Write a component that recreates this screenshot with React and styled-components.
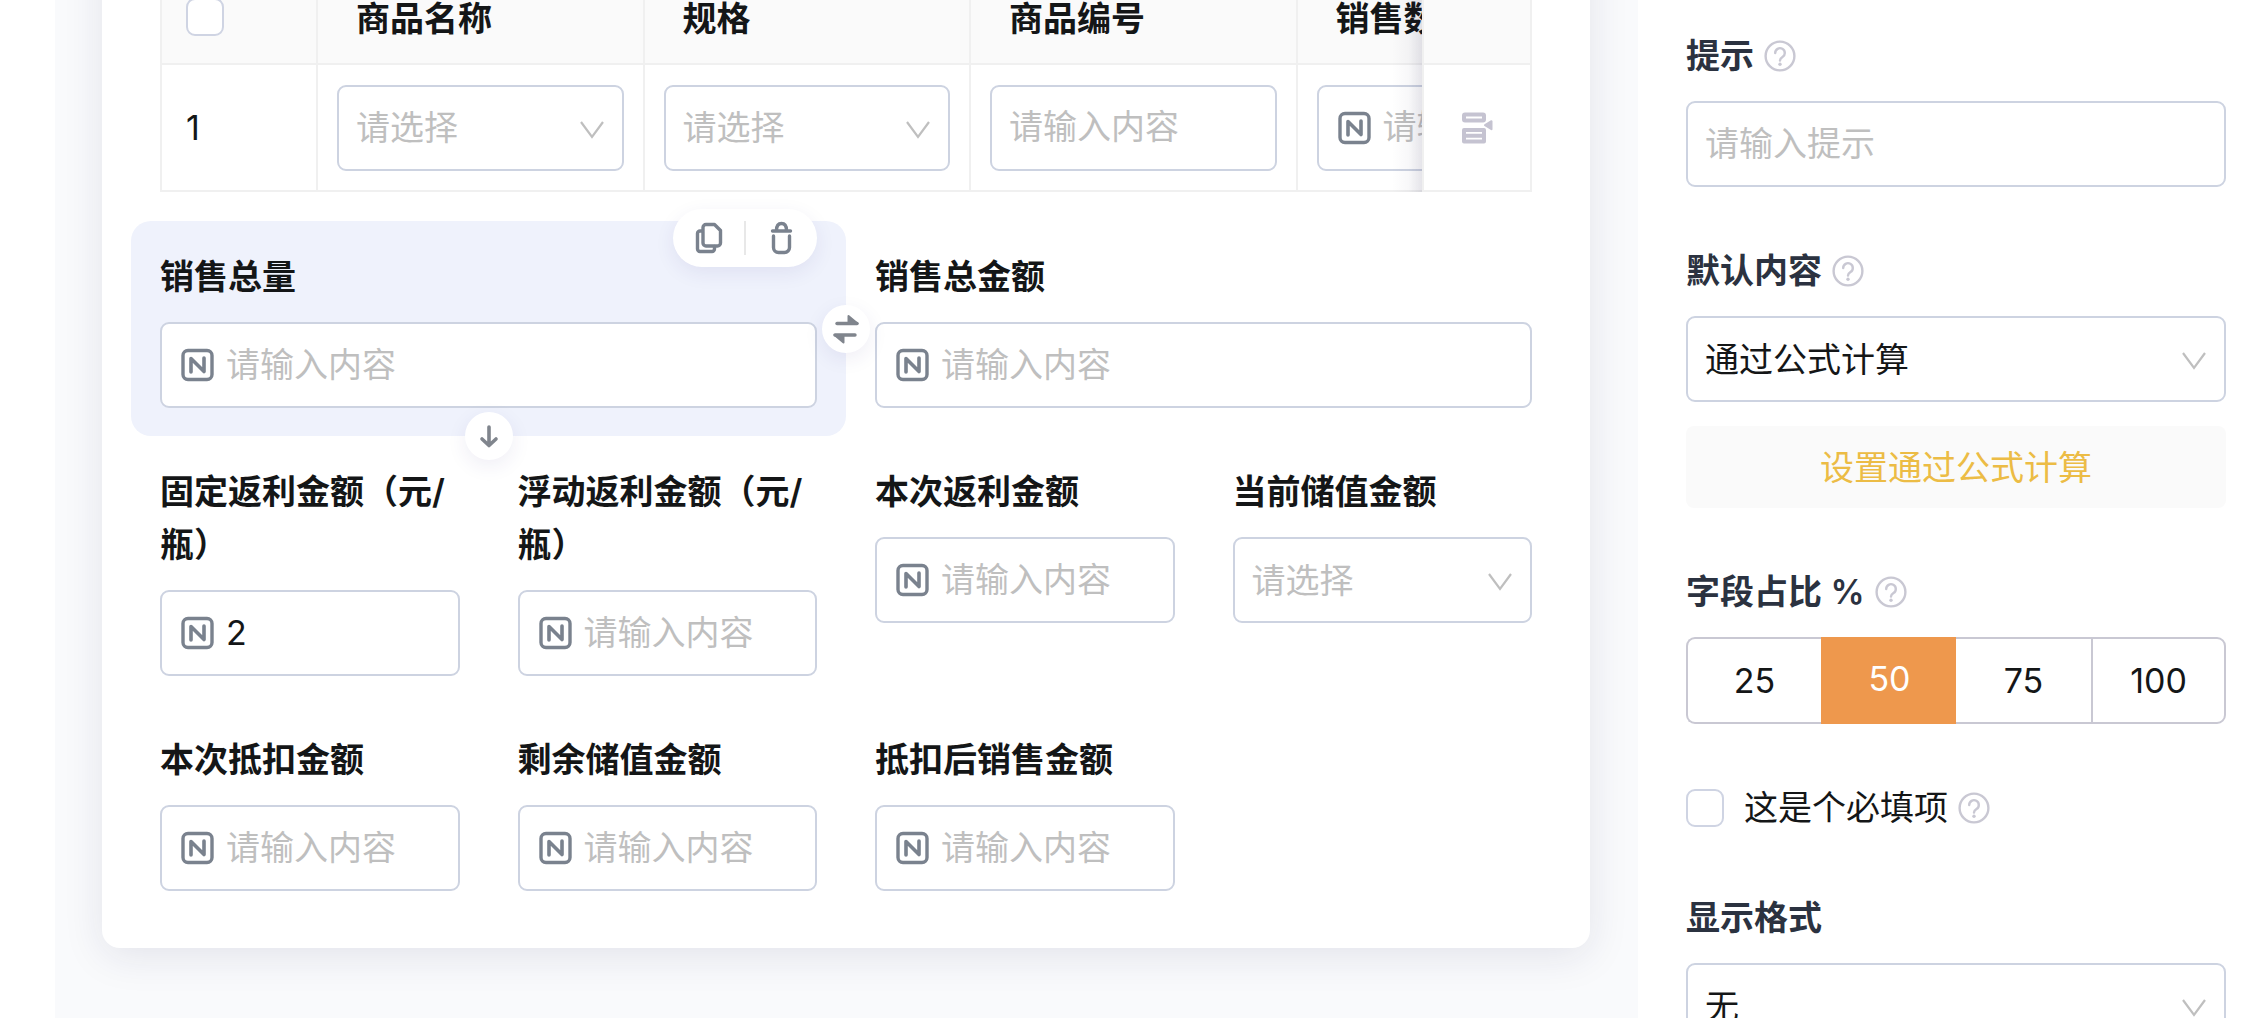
import { useState } from 'react'
import styled, { createGlobalStyle, css } from 'styled-components'

const GlobalStyle = createGlobalStyle`
  *, *::before, *::after {
    box-sizing: border-box;
  }

  body {
    margin: 0;
    background: #fff;
    color: #141617;
    font-family: Inter, 'Noto Sans CJK SC', sans-serif;
    font-size: 34px;
    line-height: 53px;
  }

  button, input, select {
    margin: 0;
    font: inherit;
    color: inherit;
  }
`

const Page = styled.div`
  display: flex;
  height: 100vh;
  overflow: hidden;
  padding-left: 55px;
`

const Canvas = styled.main`
  flex: 1;
  min-width: 0;
  overflow: hidden;
  padding: 0 48px 0 47px;
  background: #f9fafc;
`

/* the canvas is scrolled, so the top of the card is out of view */
const Card = styled.section`
  margin-top: -87px;
  padding: 58px 58px 29px;
  background: #fff;
  border-radius: 18px;
  box-shadow: 0 8px 40px rgba(30, 25, 80, 0.1);
`

const TableWrap = styled.div`
  overflow: hidden;
  margin-bottom: 29px;
`

const Table = styled.table`
  width: 1574px;
  table-layout: fixed;
  border-collapse: separate;
  border-spacing: 0;
`

const cell = css`
  padding: 0 19px;
  text-align: left;
  border-right: 2px solid #f0f0f0;
  border-bottom: 2px solid #f0f0f0;

  &:first-child {
    width: 158px;
    padding: 0 24px;
    border-left: 2px solid #f0f0f0;
  }

  &:last-child {
    position: sticky;
    right: 0;
    width: 110px;
    padding: 0;
    text-align: center;
    border-left: 2px solid #f0f0f0;
  }

  &:last-child::before {
    content: '';
    position: absolute;
    top: 0;
    right: 100%;
    bottom: -2px;
    width: 30px;
    margin-right: 2px;
    background: linear-gradient(
      to left,
      rgba(40, 35, 80, 0.12),
      rgba(40, 35, 80, 0.03) 45%,
      rgba(40, 35, 80, 0)
    );
  }
`

const Th = styled.th`
  ${cell}
  height: 94px;
  padding: 2px 38px 0;
  font-weight: 600;
  white-space: nowrap;
  background: #fafafa;
`

const Td = styled.td`
  ${cell}
  height: 127px;
  background: #fff;
`

const Checkbox = styled.input.attrs({ type: 'checkbox' })`
  appearance: none;
  display: block;
  flex: none;
  width: 38px;
  height: 38px;
  background: #fff;
  border: 2px solid #cfd4e3;
  border-radius: 9px;
`

const IconButton = styled.button`
  display: flex;
  align-items: center;
  justify-content: center;
  padding: 0;
  border: 0;
  background: none;

  td & {
    margin: 0 auto;
  }
`

const Box = styled.div`
  display: flex;
  align-items: center;
  height: 86px;
  padding: 0 18px 0 17px;
  background: #fff;
  border: 2px solid #cdd3e1;
  border-radius: 9px;

  & svg {
    flex: none;
  }
`

const Input = styled.input`
  flex: 1;
  min-width: 0;
  height: 100%;
  padding: 0 0 2px;
  border: 0;
  outline: 0;
  background: none;

  svg + & {
    margin-left: 11px;
  }

  &::placeholder {
    color: #bfbfbf;
    opacity: 1;
  }
`

const Select = styled.select`
  appearance: none;
  flex: 1;
  min-width: 0;
  height: 100%;
  padding: 0;
  border: 0;
  outline: 0;
  background: none;
  color: ${(props) => (props.$empty ? '#bfbfbf' : '#141617')};
`

const Form = styled.div`
  display: grid;
  grid-template-columns: repeat(4, minmax(0, 1fr));
  margin: 0 -29px;
`

const Field = styled.div`
  position: relative;
  grid-column: span ${(props) => props.$span || 1};
  padding: 29px 29px 28px;
  border-radius: 20px;
  background: ${(props) => (props.$active ? '#eff2fc' : 'none')};
`

const Label = styled.label`
  display: block;
  margin-bottom: 19px;
  font-weight: 600;
`

const floating = css`
  position: absolute;
  z-index: 1;
  background: #fff;
  box-shadow: 0 6px 20px rgba(50, 40, 130, 0.08);
`

const Tools = styled.div`
  ${floating}
  top: -12px;
  right: 29px;
  display: flex;
  align-items: center;
  width: 144px;
  height: 58px;
  border-radius: 29px;

  & button {
    flex: 1;
  }
`

const Divider = styled.span`
  width: 2px;
  height: 34px;
  background: #e8e8e8;
`

const RoundButton = styled(IconButton)`
  ${floating}
  width: 48px;
  height: 48px;
  border-radius: 50%;
`

const SwapButton = styled(RoundButton)`
  top: calc(50% - 24px);
  right: -24px;
`

const DownButton = styled(RoundButton)`
  bottom: -24px;
  left: calc(50% - 24px);
`

const Panel = styled.aside`
  display: flex;
  flex-direction: column;
  gap: 57px;
  flex: none;
  width: 618px;
  padding: 29px 30px 0 48px;
  background: #fff;
`

const Title = styled.div`
  display: flex;
  align-items: center;
  gap: 10px;
  margin-bottom: 19px;
  color: #2b3240;
  font-weight: 600;
`

const FormulaButton = styled.button`
  width: 100%;
  height: 82px;
  margin-top: 24px;
  padding: 0;
  border: 0;
  border-radius: 8px;
  background: #fafafa;
  color: #ecbc45;
`

const Segments = styled.div`
  display: grid;
  grid-template-columns: repeat(4, 1fr);
`

const Segment = styled.label`
  display: flex;
  align-items: center;
  justify-content: center;
  height: 87px;
  border: 2px solid #c9c8d3;
  border-right-width: 0;

  &:first-child {
    border-radius: 9px 0 0 9px;
  }

  &:last-child {
    border-right-width: 2px;
    border-radius: 0 9px 9px 0;
  }

  &:has(input:checked) {
    padding-bottom: 4px;
    border-color: #ee984d;
    background: #ee984d;
    color: #fff;
  }

  &:has(input:checked) + & {
    border-left-width: 0;
  }

  & input {
    position: absolute;
    opacity: 0;
  }
`

const CheckRow = styled.div`
  display: flex;
  align-items: center;
  gap: 10px;

  & label {
    margin-left: 10px;
  }
`

const NumberIcon = () => (
  <svg width="36" height="36" viewBox="0 0 36 36" fill="none" stroke="#7a828e" aria-hidden="true">
    <rect x="4" y="3.5" width="29" height="29" rx="5" strokeWidth="3.4" />
    <path d="M12 25V11.5L25 24.5V11" strokeWidth="3.6" strokeLinecap="round" strokeLinejoin="round" />
  </svg>
)

const ChevronIcon = () => (
  <svg width="24" height="24" viewBox="0 0 24 24" fill="none" stroke="#bfbfbf" strokeWidth="2.2" aria-hidden="true">
    <path d="M1 6L12 21L23 6" />
  </svg>
)

const HelpIcon = () => (
  <svg width="32" height="32" viewBox="0 0 32 32" fill="none" stroke="#c9c8d3" strokeWidth="2.4" aria-hidden="true">
    <circle cx="16" cy="16" r="14.4" />
    <path d="M11.200 13a4.800 4.800 0 1 1 7.300 4.100C16.800 18.200 16 19 16 20.500" strokeLinecap="round" />
    <circle cx="16" cy="24.200" r="1.700" fill="#c9c8d3" stroke="none" />
  </svg>
)

const CopyIcon = () => (
  <svg width="32" height="32" viewBox="0 0 32 32" fill="none" stroke="#7a828e" strokeWidth="3.4" strokeLinejoin="round" strokeLinecap="round" aria-hidden="true">
    <path d="M13 2.500h8.500l6 6V21a3 3 0 0 1-3 3H13a3 3 0 0 1-3-3V5.500a3 3 0 0 1 3-3z" />
    <path d="M9 9H7a2.500 2.500 0 0 0-2.500 2.500V27A2.500 2.500 0 0 0 7 29.500h12a2.500 2.500 0 0 0 2.500-2.500V24.500" />
  </svg>
)

const TrashIcon = () => (
  <svg width="32" height="34" viewBox="0 0 32 34" fill="none" stroke="#7a828e" strokeWidth="3.4" strokeLinecap="round" strokeLinejoin="round" aria-hidden="true">
    <path d="M6.500 10h18M10.500 9.500C10.500 5 12.500 2.500 15.500 2.500S20.500 5 20.500 9.500" />
    <path d="M7.500 15v11.500a5 5 0 0 0 5 5h6a5 5 0 0 0 5-5V15" />
  </svg>
)

const SwapIcon = () => (
  <svg width="32" height="32" viewBox="0 0 32 32" fill="#80858d" stroke="#80858d" strokeLinecap="round" strokeLinejoin="round" aria-hidden="true">
    <path d="M7 10.500H27" strokeWidth="3.4" />
    <path d="M18.500 3L27.500 10.500H18.500z" strokeWidth="2" />
    <path d="M5 22H25" strokeWidth="3.4" />
    <path d="M13.500 29.500L4.500 22H13.500z" strokeWidth="2" />
  </svg>
)

const DownIcon = () => (
  <svg width="24" height="24" viewBox="0 0 24 24" fill="none" stroke="#80858d" strokeWidth="3.6" strokeLinecap="round" strokeLinejoin="round" aria-hidden="true">
    <path d="M12 3V21.500M5 15L12 21.500L19 15" />
  </svg>
)

const RowIcon = () => (
  <svg width="32" height="32" viewBox="0 0 32 32" fill="none" stroke="#c5c3d1" aria-hidden="true">
    <rect x="3" y="2.500" width="20" height="6" rx="1" strokeWidth="4" />
    <path d="M3 18h20v11.500h-20zM3 23.700h20" strokeWidth="4" strokeLinejoin="round" />
    <path d="M24 13.200l6.500-4v8z" fill="#c5c3d1" strokeWidth="2" strokeLinejoin="round" />
  </svg>
)

const columns = [
  { title: '商品名称', type: 'select' },
  { title: '规格', type: 'select' },
  { title: '商品编号', type: 'text' },
  { title: '销售数量', type: 'number' },
]

const fields = [
  { id: 'total', label: '销售总量', span: 2, active: true },
  { id: 'amount', label: '销售总金额', span: 2 },
  { id: 'fixed', label: '固定返利金额（元/瓶）', value: '2' },
  { id: 'floating', label: '浮动返利金额（元/瓶）' },
  { id: 'rebate', label: '本次返利金额' },
  { id: 'stored', label: '当前储值金额', type: 'select' },
  { id: 'deduct', label: '本次抵扣金额' },
  { id: 'remain', label: '剩余储值金额' },
  { id: 'final', label: '抵扣后销售金额' },
]

const Control = ({ type = 'number', value, ...rest }) => (
  <Box>
    {type === 'select' ? (
      <>
        <Select $empty {...rest}>
          <option>请选择</option>
        </Select>
        <ChevronIcon />
      </>
    ) : (
      <>
        {type === 'number' && <NumberIcon />}
        <Input placeholder="请输入内容" defaultValue={value} {...rest} />
      </>
    )}
  </Box>
)

const ProductTable = () => (
  <TableWrap>
    <Table>
      <thead>
        <tr>
          <Th>
            <Checkbox aria-label="全选" />
          </Th>
          {columns.map((column) => (
            <Th key={column.title}>{column.title}</Th>
          ))}
          <Th />
        </tr>
      </thead>
      <tbody>
        <tr>
          <Td>1</Td>
          {columns.map((column) => (
            <Td key={column.title}>
              <Control type={column.type} aria-label={column.title} />
            </Td>
          ))}
          <Td>
            <IconButton type="button" aria-label="行操作">
              <RowIcon />
            </IconButton>
          </Td>
        </tr>
      </tbody>
    </Table>
  </TableWrap>
)

const FieldActions = () => (
  <>
    <Tools>
      <IconButton type="button" aria-label="复制">
        <CopyIcon />
      </IconButton>
      <Divider />
      <IconButton type="button" aria-label="删除">
        <TrashIcon />
      </IconButton>
    </Tools>
    <SwapButton type="button" aria-label="交换">
      <SwapIcon />
    </SwapButton>
    <DownButton type="button" aria-label="下移">
      <DownIcon />
    </DownButton>
  </>
)

const Settings = () => {
  const [ratio, setRatio] = useState(50)

  return (
    <Panel>
      <div>
        <Title>
          <label htmlFor="hint">提示</label>
          <HelpIcon />
        </Title>
        <Box>
          <Input id="hint" placeholder="请输入提示" />
        </Box>
      </div>
      <div>
        <Title>
          <label htmlFor="default">默认内容</label>
          <HelpIcon />
        </Title>
        <Box>
          <Select id="default">
            <option>通过公式计算</option>
          </Select>
          <ChevronIcon />
        </Box>
        <FormulaButton type="button">设置通过公式计算</FormulaButton>
      </div>
      <div>
        <Title>
          <span id="ratio">字段占比 %</span>
          <HelpIcon />
        </Title>
        <Segments role="radiogroup" aria-labelledby="ratio">
          {[25, 50, 75, 100].map((value) => (
            <Segment key={value}>
              <input
                type="radio"
                name="ratio"
                checked={ratio === value}
                onChange={() => setRatio(value)}
              />
              {value}
            </Segment>
          ))}
        </Segments>
      </div>
      <CheckRow>
        <Checkbox id="required" />
        <label htmlFor="required">这是个必填项</label>
        <HelpIcon />
      </CheckRow>
      <div>
        <Title>
          <label htmlFor="format">显示格式</label>
        </Title>
        <Box>
          <Select id="format">
            <option>无</option>
          </Select>
          <ChevronIcon />
        </Box>
      </div>
    </Panel>
  )
}

const App = () => (
  <>
    <GlobalStyle />
    <Page>
      <Canvas>
        <Card>
          <ProductTable />
          <Form>
            {fields.map((field) => (
              <Field key={field.id} $span={field.span} $active={field.active}>
                <Label htmlFor={field.id}>{field.label}</Label>
                <Control id={field.id} type={field.type} value={field.value} />
                {field.active && <FieldActions />}
              </Field>
            ))}
          </Form>
        </Card>
      </Canvas>
      <Settings />
    </Page>
  </>
)

export default App
